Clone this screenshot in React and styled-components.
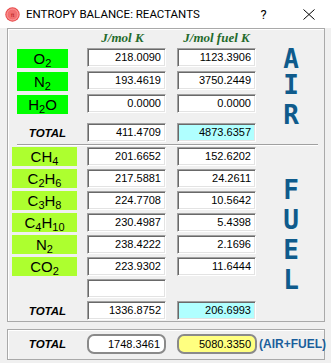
import React from 'react'
import styled, { createGlobalStyle } from 'styled-components'

const GlobalStyle = createGlobalStyle`
  html, body {
    margin: 0;
    padding: 0;
    background: #f0f0f0;
  }
  body {
    width: 331px;
    height: 363px;
    overflow: hidden;
    font-family: "Liberation Sans", Arial, sans-serif;
  }
`

const TitleBar = styled.div`
  height: 28px;
  background: #fff;
  display: flex;
  align-items: center;
  padding-left: 5px;
`

const Title = styled.span`
  margin-left: 6px;
  font-family: Roboto, "Liberation Sans", sans-serif;
  font-size: 11.5px;
  color: #000;
`

const CaptionButton = styled.div`
  width: 45px;
  height: 28px;
  display: flex;
  align-items: center;
  justify-content: center;
  font-family: Roboto, "Liberation Sans", sans-serif;
  font-size: 13px;
  margin-left: ${p => (p.$first ? 'auto' : '0')};
`

const GroupBox = styled.div`
  margin: ${p => p.$mt || 0}px 6px 0 7px;
  border: 1px solid #a9a9a9;
  box-shadow: inset 1px 1px 0 #fff;
  padding: ${p => p.$pt || 0}px 0 ${p => p.$pb || 0}px;
`

const Row = styled.div`
  display: grid;
  grid-template-columns: 75px 90px ${p => (p.$wide ? '82px auto' : '79px')};
  align-items: center;
  height: ${p => p.$h || 19}px;
  margin-top: ${p => p.$mt || 0}px;
  padding-left: ${p => p.$pl || 0}px;
`

const HeaderRow = styled(Row)`
  padding-left: 4px;
  padding-bottom: 2px;
  box-sizing: border-box;
`

const ColumnHead = styled.div`
  grid-column: ${p => p.$col};
  width: 79px;
  box-sizing: border-box;
  text-align: center;
  padding-right: ${p => p.$shift || 0}px;
  font-family: "Liberation Serif", "Times New Roman", serif;
  font-weight: bold;
  font-style: italic;
  font-size: 13px;
  color: #1f6a2c;
`

const Section = styled.div`
  display: flex;
`

const RowList = styled.div`
  display: flex;
  flex-direction: column;
  gap: ${p => p.$gap}px;
  padding-left: 4px;
  width: 244px;
`

const Species = styled.div`
  width: ${p => (p.$fuel ? 65 : 51)}px;
  margin-left: ${p => (p.$fuel ? 0 : 5)}px;
  height: 19px;
  background: ${p => (p.$fuel ? '#adff2f' : '#00ff00')};
  text-align: center;
  font-size: 15px;
  line-height: 19px;
  color: #000;
  position: relative;
  top: ${p => (p.$fuel ? 0 : 1)}px;
`

const Sub = styled.sub`
  font-size: 11px;
  vertical-align: -3px;
  line-height: 0;
`

const TotalLabel = styled.div`
  width: 65px;
  padding-left: 6px;
  box-sizing: border-box;
  text-align: center;
  font-weight: bold;
  font-style: italic;
  font-size: 11.5px;
  color: #000;
`

const ValueBox = styled.div`
  width: 79px;
  height: 19px;
  box-sizing: border-box;
  background: ${p => (p.$total ? '#b0ffff' : '#fff')};
  border: 1px solid;
  border-color: #a0a0a0 #fff #fff #a0a0a0;
  box-shadow: inset 1px 1px 0 #696969, inset -1px -1px 0 #e3e3e3;
  text-align: right;
  padding-right: 4px;
  font-size: 11px;
  line-height: 17px;
  color: #000;
`

const RoundBox = styled.div`
  width: ${p => p.$w}px;
  height: 20px;
  box-sizing: border-box;
  background: ${p => (p.$yellow ? '#ffff80' : '#fff')};
  border: 2px solid #8a8a8a;
  border-radius: 7px;
  text-align: right;
  padding-right: 4px;
  font-size: 11px;
  line-height: 16px;
  color: #000;
`

const Legend = styled.div`
  font-weight: bold;
  font-size: 12px;
  color: #1a5e9c;
  white-space: nowrap;
`

const Separator = styled.div`
  height: 1px;
  background: #a0a0a0;
  border-bottom: 1px solid #fff;
  margin: 2px 6px 1px 9px;
`

const Letters = styled.div`
  display: flex;
  flex-direction: column;
  margin-left: 27px;
  width: 16px;
`

const Letter = styled.div`
  font-family: "DejaVu Sans Mono", monospace;
  font-weight: bold;
  font-size: 26px;
  line-height: 26px;
  text-align: center;
  color: #0f5b8c;
  margin-top: ${p => p.$mt || 0}px;
`

const AppIcon = () => (
  <svg width="15" height="15" viewBox="0 0 15 15">
    <circle cx="7.5" cy="7.5" r="7.2" fill="#e94b4b" />
    <circle cx="7.5" cy="7.5" r="5.6" fill="#f27070" stroke="#ffb3b3" strokeWidth="0.8" />
    <text x="7.5" y="9.6" fontSize="6" textAnchor="middle" fill="#b01818" fontFamily="DejaVu Sans">π</text>
  </svg>
)

const CloseIcon = () => (
  <svg width="12" height="11" viewBox="0 0 12 11">
    <path d="M0.5 0.5 L11.5 10.5 M11.5 0.5 L0.5 10.5" stroke="#000" strokeWidth="1" fill="none" />
  </svg>
)

const air = [
  { name: ['O', '2'], a: '218.0090', b: '1123.3906' },
  { name: ['N', '2'], a: '193.4619', b: '3750.2449' },
  { name: ['H', '2', 'O'], a: '0.0000', b: '0.0000' },
]

const fuel = [
  { name: ['CH', '4'], a: '201.6652', b: '152.6202' },
  { name: ['C', '2', 'H', '6'], a: '217.5881', b: '24.2611' },
  { name: ['C', '3', 'H', '8'], a: '224.7708', b: '10.5642' },
  { name: ['C', '4', 'H', '10'], a: '230.4987', b: '5.4398' },
  { name: ['N', '2'], a: '238.4222', b: '2.1696' },
  { name: ['CO', '2'], a: '223.9302', b: '11.6444' },
]

// alternate plain text and subscripts: [text, sub, text, sub...]
const Formula = ({ parts }) =>
  parts.map((p, i) => (i % 2 ? <Sub key={i}>{p}</Sub> : <React.Fragment key={i}>{p}</React.Fragment>))

export default function App() {
  return (
    <>
      <GlobalStyle />
      <TitleBar>
        <AppIcon />
        <Title>ENTROPY BALANCE: REACTANTS</Title>
        <CaptionButton $first>?</CaptionButton>
        <CaptionButton>
          <CloseIcon />
        </CaptionButton>
      </TitleBar>

      <GroupBox $pb={1}>
        <HeaderRow>
          <ColumnHead $col={2} $shift={8}>J/mol K</ColumnHead>
          <ColumnHead $col={3}>J/mol fuel K</ColumnHead>
        </HeaderRow>

        <Section>
          <RowList $gap={4}>
            {air.map(r => (
              <Row key={r.a + r.b}>
                <Species><Formula parts={r.name} /></Species>
                <ValueBox>{r.a}</ValueBox>
                <ValueBox>{r.b}</ValueBox>
              </Row>
            ))}
            <Row $mt={6}>
              <TotalLabel>TOTAL</TotalLabel>
              <ValueBox>411.4709</ValueBox>
              <ValueBox $total>4873.6357</ValueBox>
            </Row>
          </RowList>
          <Letters>
            <Letter $mt={-2}>A</Letter>
            <Letter>I</Letter>
            <Letter $mt={4}>R</Letter>
          </Letters>
        </Section>

        <Separator />

        <Section>
          <RowList $gap={3}>
            {fuel.map(r => (
              <Row key={r.a}>
                <Species $fuel><Formula parts={r.name} /></Species>
                <ValueBox>{r.a}</ValueBox>
                <ValueBox>{r.b}</ValueBox>
              </Row>
            ))}
            <Row>
              <span />
              <ValueBox />
            </Row>
            <Row>
              <TotalLabel>TOTAL</TotalLabel>
              <ValueBox>1336.8752</ValueBox>
              <ValueBox $total>206.6993</ValueBox>
            </Row>
          </RowList>
          <Letters>
            <Letter $mt={30}>F</Letter>
            <Letter $mt={4}>U</Letter>
            <Letter $mt={4}>E</Letter>
            <Letter $mt={4}>L</Letter>
          </Letters>
        </Section>
      </GroupBox>

      <GroupBox $mt={7} $pt={4} $pb={5}>
        <Row $wide $h={20} $pl={4}>
          <TotalLabel>TOTAL</TotalLabel>
          <RoundBox $w={79}>1748.3461</RoundBox>
          <RoundBox $w={80} $yellow>5080.3350</RoundBox>
          <Legend>(AIR+FUEL)</Legend>
        </Row>
      </GroupBox>
    </>
  )
}
